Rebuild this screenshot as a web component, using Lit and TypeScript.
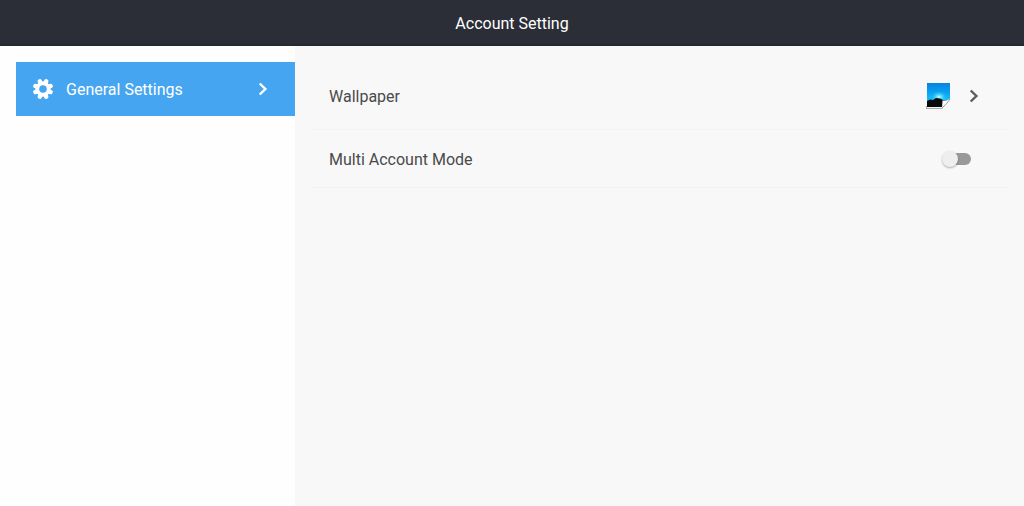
import { LitElement, html, css, svg } from "lit";
import { customElement, state } from "lit/decorators.js";

const TEETH = [22.5, 67.5, 112.5, 157.5, 202.5, 247.5, 292.5, 337.5];

const gearIcon = html`
  <svg class="gear" width="20" height="20" viewBox="-10 -10 20 20" aria-hidden="true">
    <circle r="5.6" fill="none" stroke="currentColor" stroke-width="3.6" />
    ${TEETH.map(
      (angle) => svg`<path
        transform="rotate(${angle})"
        d="M-2.7 -6 L-1.9 -9.4 Q-1.7 -10.2 -1 -10.3 L1 -10.3 Q1.7 -10.2 1.9 -9.4 L2.7 -6 Z"
        fill="currentColor" />`
    )}
  </svg>
`;

const chevronIcon = html`
  <svg class="chevron" width="10" height="14" viewBox="0 0 10 14" aria-hidden="true">
    <path d="M1.7 1.5 L7.4 7 L1.7 12.5" fill="none" stroke="currentColor" stroke-width="2.4" />
  </svg>
`;

const wallpaperIcon = html`
  <svg width="26" height="28" viewBox="0 0 26 28" aria-hidden="true">
    <defs>
      <linearGradient id="sky" x1="0" y1="0" x2="0" y2="1">
        <stop offset="0" stop-color="#0883dc" />
        <stop offset="0.35" stop-color="#0a9df0" />
        <stop offset="0.75" stop-color="#16c4fb" />
      </linearGradient>
      <radialGradient id="sun">
        <stop offset="0" stop-color="#d8fbff" />
        <stop offset="0.35" stop-color="#6fe4fc" stop-opacity="0.8" />
        <stop offset="1" stop-color="#20bdf5" stop-opacity="0" />
      </radialGradient>
    </defs>
    <path d="M1 24 H17 L25 17 L17 27 H1 Z" fill="#a9abad" />
    <path d="M2 1 H25 V18 L17 26 H2 Z" fill="#f2f4f5" />
    <path d="M2 1 H25 V17 L17 25 H2 Z" fill="url(#sky)" />
    <ellipse cx="14" cy="15" rx="8" ry="6" fill="url(#sun)" />
    <path d="M2 19 L5 17.5 L8 18 L11 16 L15 16.5 L18 18 L23 18 L17 25 H2 Z" fill="#08090b" />
    <path d="M17 26 L17.5 18.5 Q21 19 25 17 Q22 21.5 17 26 Z" fill="#fafafa" />
    <path d="M17 26 Q22 22 25 17" fill="none" stroke="#999" stroke-width="0.9" />
  </svg>
`;

@customElement("app-root")
export class AppRoot extends LitElement {
  @state() private multiAccount = false;

  static styles = css`
    :host {
      display: flex;
      flex-direction: column;
      min-height: 100vh;
      background: #fefefe;
      color: #4a4a4a;
      font: 16px/24px Roboto, sans-serif;
    }
    * {
      box-sizing: border-box;
    }
    svg {
      display: block;
      flex: none;
    }
    .header {
      padding: 12px 16px 8px;
      border-bottom: 2px solid #262931;
      background: #2b2e37;
      color: #fff;
      text-align: center;
    }
    .title {
      margin: 0;
      font: inherit;
    }
    .body {
      flex: 1;
      display: grid;
      grid-template-columns: 295px 1fr;
    }
    .sidebar {
      padding: 16px 0 0 16px;
    }
    .tab {
      display: flex;
      align-items: center;
      gap: 13px;
      height: 54px;
      padding: 0 27px 0 17px;
      background: #45a5f1;
      color: #fff;
      text-decoration: none;
    }
    .label {
      flex: 1;
      padding-top: 2px;
    }
    .content {
      padding: 16px 16px 0;
      background: #f8f8f8;
    }
    .row {
      display: flex;
      align-items: center;
      width: 100%;
      padding: 0 29px 0 18px;
      border: 0;
      border-bottom: 1px solid #f2f2f2;
      background: none;
      color: inherit;
      font: inherit;
      text-align: left;
      cursor: pointer;
    }
    .wallpaper {
      gap: 18px;
      height: 68px;
    }
    .wallpaper .chevron {
      color: #5c5c5c;
    }
    .multi {
      height: 58px;
      padding-right: 37px;
    }
    .switch {
      appearance: none;
      display: flex;
      align-items: center;
      width: 26px;
      height: 12px;
      margin: 0;
      border-radius: 6px;
      background: #999;
      cursor: pointer;
    }
    .switch::before {
      content: "";
      width: 16px;
      height: 16px;
      flex: none;
      margin-left: -3px;
      border-radius: 50%;
      background: #eee;
      box-shadow: 0 1px 2px rgba(0, 0, 0, 0.3);
    }
    .switch:checked {
      background: #9fd0f7;
    }
    .switch:checked::before {
      margin-left: 13px;
      background: #45a5f1;
    }
  `;

  private onToggle(event: Event) {
    this.multiAccount = (event.target as HTMLInputElement).checked;
  }

  render() {
    return html`
      <header class="header"><h1 class="title">Account Setting</h1></header>
      <div class="body">
        <nav class="sidebar">
          <a class="tab" href="#general" aria-current="page">
            ${gearIcon}
            <span class="label">General Settings</span>
            ${chevronIcon}
          </a>
        </nav>
        <main class="content">
          <button class="row wallpaper" type="button">
            <span class="label">Wallpaper</span>
            ${wallpaperIcon} ${chevronIcon}
          </button>
          <div class="row multi">
            <label class="label" for="multi">Multi Account Mode</label>
            <input
              class="switch"
              id="multi"
              type="checkbox"
              role="switch"
              .checked=${this.multiAccount}
              @change=${this.onToggle}
            />
          </div>
        </main>
      </div>
    `;
  }
}
